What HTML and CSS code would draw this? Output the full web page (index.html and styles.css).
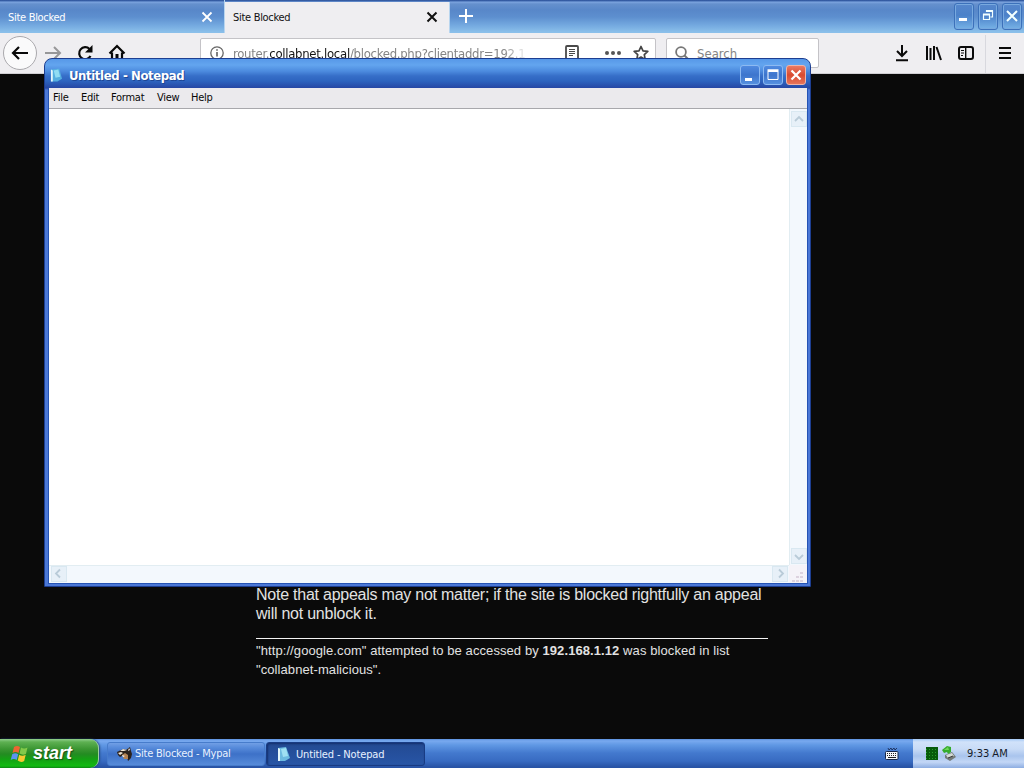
FILE: index.html
```html
<!DOCTYPE html>
<html lang="en">
<head>
<meta charset="utf-8">
<title>Site Blocked</title>
<link rel="stylesheet" href="styles.css">
</head>
<body>
<div class="desktop">
  <header class="tabbar">
    <div class="tab"><span class="tab-label">Site Blocked</span><svg width="12" height="12" viewBox="0 0 12 12"><path d="M1.500 1.500l9 9m0-9l-9 9" stroke="#fff" stroke-width="1.800"/></svg></div>
    <div class="tab tab-active"><span class="tab-label">Site Blocked</span><svg width="12" height="12" viewBox="0 0 12 12"><path d="M1.500 1.500l9 9m0-9l-9 9" stroke="#111" stroke-width="2"/></svg></div>
    <svg class="new-tab" width="16" height="16" viewBox="0 0 16 16"><path d="M8 1v14M1 8h14" stroke="#fff" stroke-width="2"/></svg>
    <div class="browser-controls">
      <span class="bc"><svg width="20" height="26" viewBox="0 0 20 26"><path d="M5 15h8v3H5z" fill="#fff"/></svg></span>
      <span class="bc"><svg width="20" height="26" viewBox="0 0 20 26"><path d="M8.500 9V8h6v6h-2M5.500 11.500h6v5h-6z" fill="none" stroke="#f2ffff" stroke-width="1.200"/><path d="M8 8h7M5 11.500h7" stroke="#f2ffff" stroke-width="1.800"/></svg></span>
      <span class="bc"><svg width="20" height="26" viewBox="0 0 20 26"><path d="M5 8l10 10M15 8L5 18" stroke="#f2ffff" stroke-width="2"/></svg></span>
    </div>
  </header>
  <nav class="toolbar">
    <span class="back"><svg width="20" height="20" viewBox="0 0 20 20"><path d="M18 10H3M9 4l-6 6 6 6" fill="none" stroke="#080808" stroke-width="2.200"/></svg></span>
    <svg class="forward" width="18" height="20" viewBox="0 0 18 20"><path d="M1 10h15M10 4l6 6-6 6" fill="none" stroke="#979799" stroke-width="2"/></svg>
    <svg class="reload" width="18" height="18" viewBox="0 0 18 18"><path d="M14.500 12A6 6 0 1 1 13.500 5" fill="none" stroke="#080808" stroke-width="2.200"/><path d="M16.500 1v7.500H9z" fill="#080808"/></svg>
    <svg class="home" width="18" height="18" viewBox="0 0 18 18"><path d="M1.500 9.500L9 2l7.500 7.500M4 8.500V16h10V8.500" fill="none" stroke="#080808" stroke-width="2.200"/><path d="M7.500 10h3v6h-3z" fill="#080808"/></svg>
    <div class="urlbar">
      <svg class="info" width="14" height="14" viewBox="0 0 14 14"><circle cx="7" cy="7" r="6.200" fill="none" stroke="#666" stroke-width="1.300"/><path d="M7 6v4.500M7 3.200v1.500" stroke="#555" stroke-width="1.500"/></svg>
      <span class="url">router.<b>collabnet.local</b>/blocked.php?clientaddr=192.1</span>
      <svg class="reader" width="14" height="16" viewBox="0 0 14 16"><rect x="1" y="1" width="12" height="14" rx="1" fill="none" stroke="#4a4a4a" stroke-width="1.800"/><path d="M4 4.500h6M4 6.500h6M4 8.500h6M4 10.500h4" stroke="#4a4a4a"/></svg>
      <svg class="dots" width="18" height="6" viewBox="0 0 18 6"><g fill="#555"><circle cx="3" cy="3" r="2"/><circle cx="9" cy="3" r="2"/><circle cx="15" cy="3" r="2"/></g></svg>
      <svg class="star" width="16" height="16" viewBox="0 0 16 16"><path d="M8 1.500l2 4.300 4.800.6-3.500 3.200.9 4.800L8 12.100l-4.200 2.300.9-4.800L1.200 6.400 6 5.800z" fill="none" stroke="#444" stroke-width="1.700" stroke-linejoin="round"/></svg>
    </div>
    <div class="search"><svg width="15" height="15" viewBox="0 0 15 15"><circle cx="6" cy="6" r="4.900" fill="none" stroke="#777" stroke-width="1.800"/><path d="M9.500 9.500L14 14" stroke="#777" stroke-width="2"/></svg><span class="search-label">Search</span></div>
    <div class="tools">
      <svg width="16" height="18" viewBox="0 0 16 18"><path d="M8 1v11M3 7l5 5 5-5M2 16.200h12" fill="none" stroke="#0a0a0a" stroke-width="2"/></svg>
      <svg width="17" height="18" viewBox="0 0 17 18"><path d="M2 2v14M5.500 4v12M9 2v14M11.500 3l4.500 13" fill="none" stroke="#0a0a0a" stroke-width="2"/></svg>
      <svg class="sidebar" width="16" height="18" viewBox="0 0 16 18"><rect x="1" y="3" width="14" height="12" rx="2" fill="none" stroke="#0a0a0a" stroke-width="2"/><path d="M7.700 3v12" stroke="#0a0a0a" stroke-width="1.400"/><path d="M3 6.500h3M3 9h3M3 11.500h2" stroke="#0a0a0a"/></svg>
    </div>
    <div class="menu-button"><svg width="12" height="14" viewBox="0 0 12 14"><path d="M0 2h12M0 7h12M0 12h12" stroke="#0a0a0a" stroke-width="2"/></svg></div>
  </nav>
  <main class="page">
    <article class="notice">
      <p class="appeal">Note that appeals may not matter; if the site is blocked rightfully an appeal<br>will not unblock it.</p>
      <p class="detail">"http://google.com" attempted to be accessed by <b>192.168.1.12</b> was blocked in list<br>"collabnet-malicious".</p>
    </article>
  </main>
  <footer class="taskbar">
    <div class="start">
      <svg width="20" height="20" viewBox="0 0 20 20"><path d="M4 3q3-2 6 0L8.500 9Q5.500 7 2.500 9z" fill="#ed6532"/><path d="M11 3.600q3 2 6.500 0L16 9.800q-3 2-6.500-.2z" fill="#82c94a"/><path d="M2.200 10.300q3-2 6 0L6.700 16q-3-2-6 0z" fill="#5b94f0"/><path d="M9.200 10.800q3 2 6.500 0L14.200 17q-3 2-6.500-.4z" fill="#f6c831"/></svg>
      <span class="start-label">start</span>
    </div>
    <div class="task">
      <svg class="raccoon" width="16" height="14" viewBox="0 0 16 14"><path d="M0 5l4-2 3-1 2 1 4-3 1 4 1 3-1 4-3 3-1-4-3-2-4 2-2-2z" fill="#2b211b"/><path d="M3 4l3-2 4 1-3 1zM1 6l3-1 2 1-3 2z" fill="#efe3d2"/><path d="M5 8l3-2 3 2v4H7z" fill="#b28254"/><path d="M5 8l3 1-2 1zM12 1l1 2-2 1z" fill="#fff"/></svg>
      <span class="task-label task-a">Site Blocked - Mypal</span>
    </div>
    <div class="task task-on">
      <svg class="note" width="13" height="14" viewBox="0 0 13 14"><path d="M1 1l8-1 4 11-5 3H1z" fill="#6dbbe0"/><path d="M1 1l2 1v12H1z" fill="#e5f7fb"/><path d="M4 2l5-1 2 8-5 1z" fill="#9fe0f2"/></svg>
      <span class="task-label task-b">Untitled - Notepad</span>
    </div>
    <svg class="keyboard" width="14" height="14" viewBox="0 0 14 14"><path d="M3 1l1 2 2-2 1 2 2-2 1 2 2-2" fill="none" stroke="#15254a" stroke-width=".8"/><rect x=".5" y="4.500" width="12.500" height="8" rx="1" fill="#f4f6fa" stroke="#17284a"/><path d="M2 6.500h10M2 8.500h10" stroke="#222" stroke-dasharray="1 1"/><path d="M3 10.500h8" stroke="#222"/></svg>
    <div class="tray">
      <svg width="12" height="13" viewBox="0 0 12 13"><rect width="12" height="13" fill="#075b0b"/><path d="M0 2.500h12M0 5.500h12M0 8.500h12M0 11.500h12" stroke="#279a2c" stroke-dasharray="1 2"/></svg>
      <svg class="eject" width="15" height="16" viewBox="0 0 15 16"><path d="M3 9l7-3 4 5-6 4-5-3z" fill="#737a78"/><path d="M4 9l6-2 2 3-6 2z" fill="#d4dbd8"/><path d="M6 12l5-2" stroke="#333"/><path d="M0 4l5-4 4 1v5l-3 2-1-2-3 1z" fill="#35ac2b"/><path d="M2 4l4-3 1 3z" fill="#70d65a"/></svg>
      <span class="clock">9:33 AM</span>
    </div>
  </footer>

  <section class="notepad">
    <div class="titlebar">
      <svg class="note" width="12" height="14" viewBox="0 0 13 14"><path d="M1 1l9-1 3 11-5 3H1z" fill="#55afe0"/><path d="M1 1l2 1v12H1z" fill="#e5f7fb"/><path d="M4 2l5-1 2 8-5 1z" fill="#91ddf3"/></svg>
      <span class="title">Untitled - Notepad</span>
      <div class="controls">
        <span class="wc"><svg width="18" height="18" viewBox="0 0 18 18"><path d="M4 12h7v3H4z" fill="#fff"/></svg></span>
        <span class="wc"><svg width="18" height="18" viewBox="0 0 18 18"><path d="M4 5.500h10v8H4z" fill="none" stroke="#fff"/><path d="M3.500 4.500h11" stroke="#fff" stroke-width="2.500"/></svg></span>
        <span class="wc wc-close"><svg width="18" height="18" viewBox="0 0 18 18"><path d="M4.500 4.500l9 9m0-9l-9 9" stroke="#fff" stroke-width="2.200"/></svg></span>
      </div>
    </div>
    <div class="client">
      <div class="menubar"><span class="m1">File</span><span class="m2">Edit</span><span class="m3">Format</span><span class="m4">View</span><span class="m5">Help</span></div>
      <div class="editor">
        <div class="paper"></div>
        <div class="vbar">
          <span class="sb"><svg width="14" height="15" viewBox="0 0 14 15"><path d="M3 9l4-4 4 4" fill="none" stroke="#b9cbd8" stroke-width="1.800"/></svg></span>
          <span class="sb"><svg width="14" height="15" viewBox="0 0 14 15"><path d="M3 6l4 4 4-4" fill="none" stroke="#b9cbd8" stroke-width="1.800"/></svg></span>
        </div>
        <div class="hbar">
          <span class="sb"><svg width="14" height="15" viewBox="0 0 14 15"><path d="M8 2.500l-4 4 4 4" fill="none" stroke="#b9cbd8" stroke-width="1.800"/></svg></span>
          <span class="sb"><svg width="14" height="15" viewBox="0 0 14 15"><path d="M6 2.500l4 4-4 4" fill="none" stroke="#b9cbd8" stroke-width="1.800"/></svg></span>
        </div>
        <div class="grip"><svg width="14" height="14" viewBox="0 0 14 14"><path d="M9 3h3v2H9zM5 7h3v2H5zM9 7h3v2H9zM1 11h3v2H1zM5 11h3v2H5zM9 11h3v2H9z" fill="#ddd3df"/></svg></div>
      </div>
    </div>
  </section>
</div>
</body>
</html>
```
FILE: styles.css
```css
* { box-sizing: border-box; }
body { margin: 0; overflow: hidden; }
svg { display: block; flex: none; }
.desktop { position: relative; width: 1024px; height: 768px; display: flex; flex-direction: column; overflow: hidden; font: 11px "DejaVu Sans Condensed", "DejaVu Sans", sans-serif; white-space: nowrap; }
.tabbar { height: 33px; display: flex; align-items: flex-start; background: linear-gradient(#2c5198 0, #3d66ad 1px, #7da5df 2px, #6590cd 4px, #5887c9 10px, #5d8fcf 17px, #73a8df 25px, #8abfea 32px); }
.tab { width: 225px; height: 33px; padding: 1px 11px 0 8px; display: flex; align-items: center; justify-content: space-between; color: #fff; border-right: 1px solid #b8d5ef; }
.tab-active { height: 31px; margin-top: 2px; padding: 0 12px 1px 8px; color: #111; background: #efeef1; }
.tab-label { width: 60px; letter-spacing: -.3px; }
.tab-active svg { margin-right: -1px; }
.new-tab { margin: 8px 0 0 8px; }
.browser-controls { margin: 3px 2px 0 auto; display: flex; gap: 4px; }
.bc { width: 20px; height: 27px; border: 1px solid #3c71ba; border-radius: 3px; background: linear-gradient(#5687cc, #4b81c9 45%, #76b2e6); box-shadow: inset 0 0 0 1px #78a9df; }
.bc svg { margin: -1px 0 0 -1px; }
.toolbar { height: 41px; display: flex; align-items: flex-start; background: #efeef1; border-bottom: 1px solid #d0cfd3; }
.back { width: 34px; height: 34px; margin: 3px 0 0 3px; border: 1px solid #aaa9ad; border-radius: 50%; background: #fafafb; display: flex; align-items: center; justify-content: center; }
.forward { margin: 10px 0 0 7px; }
.reload { margin: 11px 0 0 14px; }
.home { margin: 11px 0 0 14px; }
.urlbar { width: 456px; height: 30px; margin: 5px 0 0 74px; padding: 0 6px 0 9px; display: flex; align-items: center; background: #fff; border: 1px solid #c4c3c7; border-radius: 2px; }
.url { flex: none; width: 294px; margin: 1px 0 0 9px; overflow: hidden; font-size: 13px; letter-spacing: -.28px; color: #858585; -webkit-mask-image: linear-gradient(90deg, #000 270px, transparent 296px); mask-image: linear-gradient(90deg, #000 270px, transparent 296px); }
.url b { font-weight: normal; color: #151515; }
.reader { margin-left: 38px; }
.dots { margin-left: 25px; }
.star { margin-left: 11px; }
.search { width: 153px; height: 30px; margin: 5px 0 0 10px; padding-left: 8px; display: flex; align-items: center; gap: 7px; background: #fff; border: 1px solid #c4c3c7; border-radius: 2px; color: #858585; }
.search-label { font-size: 13px; }
.tools { display: flex; gap: 15px; margin: 11px 0 0 75px; }
.sidebar { margin-left: 1px; }
.menu-button { height: 38px; margin: 2px 0 0 11px; padding: 11px 0 0 13px; border-left: 1px solid #d8d8de; }
.page { flex: 1; min-height: 0; background: #0a0a0a; }
.notice { width: 512px; margin: 0 auto; padding-top: 511px; font-family: "Liberation Sans", Arial, sans-serif; color: #e2e2e2; }
.appeal { margin: 0; padding-bottom: 15px; font-size: 16px; line-height: 19px; letter-spacing: -.24px; border-bottom: 1px solid #f4f4f4; }
.detail { margin: 2px 0 0; font-size: 13px; line-height: 19px; letter-spacing: .085px; }
.taskbar { height: 29px; display: flex; align-items: center; background: linear-gradient(#5c91df 0, #78a9ef 2px, #6098e4 6px, #4379ce 14px, #386bc2 22px, #2853a5 28px); color: #fff; }
.start { width: 99px; height: 29px; padding-left: 10px; display: flex; align-items: center; gap: 3px; border-radius: 0 9px 9px 0; border-right: 1px solid #9ccd9f; background: linear-gradient(#90cf8b 0, #5eb052 3px, #3b9632 10px, #248b22 15px, #14a014 20px, #12ba12 27px, #0d8515 29px); box-shadow: 1px 0 2px #24487c; }
.start-label { font: italic bold 18px "Liberation Sans", sans-serif; text-shadow: 1px 1px 1px #155017; }
.task { width: 158px; height: 24px; margin: 1px 0 1px 8px; padding-left: 9px; display: flex; align-items: center; gap: 2px; border: 1px solid #477ccb; border-radius: 3px; background: linear-gradient(#719fe5, #588cdb 20%, #3d71c8 50%, #568bd9); color: #e8f2ff; }
.task-on { width: 159px; margin-left: 1px; padding-left: 10px; gap: 6px; border-color: #183b83; background: linear-gradient(#234a92, #254f9c 50%, #2856a6); box-shadow: inset 1px 1px 2px #132f6c; }
.task-a { width: 97px; letter-spacing: -.23px; }
.task-b { width: 92px; padding-top: 1px; letter-spacing: -.15px; }
.keyboard { margin: 0 0 0 auto; }
.tray { width: 111px; height: 29px; margin-left: 14px; padding-left: 13px; display: flex; align-items: center; color: #151b29; background: linear-gradient(#a5c9f5 0, #d1e2fa 3px, #c8dbf6 10px, #a9c4ed 17px, #c3d7f6 23px, #8dade1 29px); }
.eject { margin-left: 4px; }
.clock { margin-left: 10px; }
.notepad { position: absolute; left: 44px; top: 58px; width: 767px; height: 529px; display: flex; flex-direction: column; padding: 0 2px 2px 3px; border: 1px solid #1d3e91; border-radius: 8px 8px 0 0; background: linear-gradient(#5798e8 0, #63a5ef 6px, #4d8cdf 12px, #366ec8 17px, #2d64bf 22px, #2647a4 29px, #4b78d6 31px); }
.titlebar { height: 29px; display: flex; align-items: center; padding: 3px 2px 0; color: #fff; }
.title { margin-left: 7px; font-size: 13px; font-weight: bold; letter-spacing: -.39px; text-shadow: 1px 1px #1e4795; }
.controls { display: flex; gap: 3px; margin-left: auto; }
.wc { width: 20px; height: 20px; border: 1px solid #8dbaf2; border-radius: 3px; background: linear-gradient(#508be0, #3d75cd 50%, #5690df); }
.wc-close { border-color: #efb4a7; background: linear-gradient(#e87a63, #d94b30 50%, #e6745a); }
.client { flex: 1; min-height: 0; display: flex; flex-direction: column; border: 1px solid #2553b4; border-top: 0; background: #ebeaed; }
.menubar { height: 21px; padding: 0 0 2px 4px; display: flex; align-items: center; color: #080808; border-bottom: 1px solid #a8a8ac; }
.menubar span { letter-spacing: -.25px; }
.m1 { width: 28px; }
.m2 { width: 30px; }
.m3 { width: 46px; }
.m4 { width: 34px; }
.editor { flex: 1; min-height: 0; display: grid; grid-template-columns: 1fr 18px; grid-template-rows: 1fr 18px; background: #fff; }
.vbar, .hbar { display: flex; justify-content: space-between; background: #f3f8fd; }
.vbar { flex-direction: column; align-items: center; padding: 2px 1px 1px; border-left: 1px solid #e2edf2; }
.hbar { align-items: center; padding: 0 1px 1px 2px; border-top: 1px solid #e2edf2; }
.sb { width: 16px; height: 16px; border: 1px solid #d9e8f1; background: #e7f0f8; }
.grip { display: flex; align-items: flex-end; justify-content: center; background: #f5f3f8; }
```
